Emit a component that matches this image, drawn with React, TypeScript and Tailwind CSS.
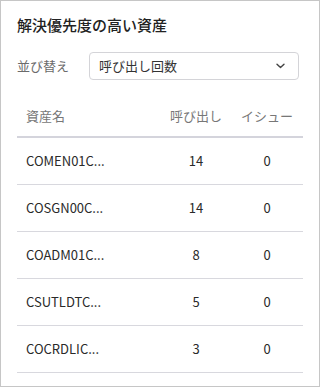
const assets = [
	{ name: 'COMEN01C...', calls: 14, issues: 0 },
	{ name: 'COSGN00C...', calls: 14, issues: 0 },
	{ name: 'COADM01C...', calls: 8, issues: 0 },
	{ name: 'CSUTLDTC...', calls: 5, issues: 0 },
	{ name: 'COCRDLIC...', calls: 3, issues: 0 },
];

function SortSelect() {
	return (
		<div className="flex h-[28px] w-[210px] items-center justify-between rounded-[4px] border border-[#d4d4d8] pl-[9px] pr-[13px]">
			<span className="text-[13px] text-[#333]">呼び出し回数</span>
			<svg width="9" height="6" viewBox="0 0 9 6" fill="none">
				<path d="M1 1.2 L4.5 4.6 L8 1.2" stroke="#444" strokeWidth="1.4" strokeLinecap="round" strokeLinejoin="round" />
			</svg>
		</div>
	);
}

export default function App() {
	return (
		<div
			className="h-[387px] w-[320px] border border-[#c6c6c6] bg-white px-[16px] pt-[13px]"
			style={{ fontFamily: '"Noto Sans CJK JP", "Noto Sans", sans-serif' }}
		>
			<h2 className="text-[15px] font-medium leading-[22px] text-[#222]">解決優先度の高い資産</h2>
			<div className="mt-[16px] flex items-center gap-[20px]">
				<span className="text-[13px] text-[#6b6b6b]">並び替え</span>
				<SortSelect />
			</div>
			<table className="mt-[16px] w-[286px] border-collapse text-[13px]">
				<thead>
					<tr className="h-[41px] border-b-2 border-[#d4d4dc] text-[#777]">
						<th className="pl-[9px] text-left font-normal">資産名</th>
						<th className="w-[70px] text-center font-normal">呼び出し</th>
						<th className="w-[72px] text-center font-normal">イシュー</th>
					</tr>
				</thead>
				<tbody className="text-[#2a2a2a]">
					{assets.map((a) => (
						<tr key={a.name} className="h-[47px] border-b border-[#d8d8de]">
							<td className="pl-[9px]">{a.name}</td>
							<td className="text-center">{a.calls}</td>
							<td className="text-center">{a.issues}</td>
						</tr>
					))}
				</tbody>
			</table>
		</div>
	);
}
